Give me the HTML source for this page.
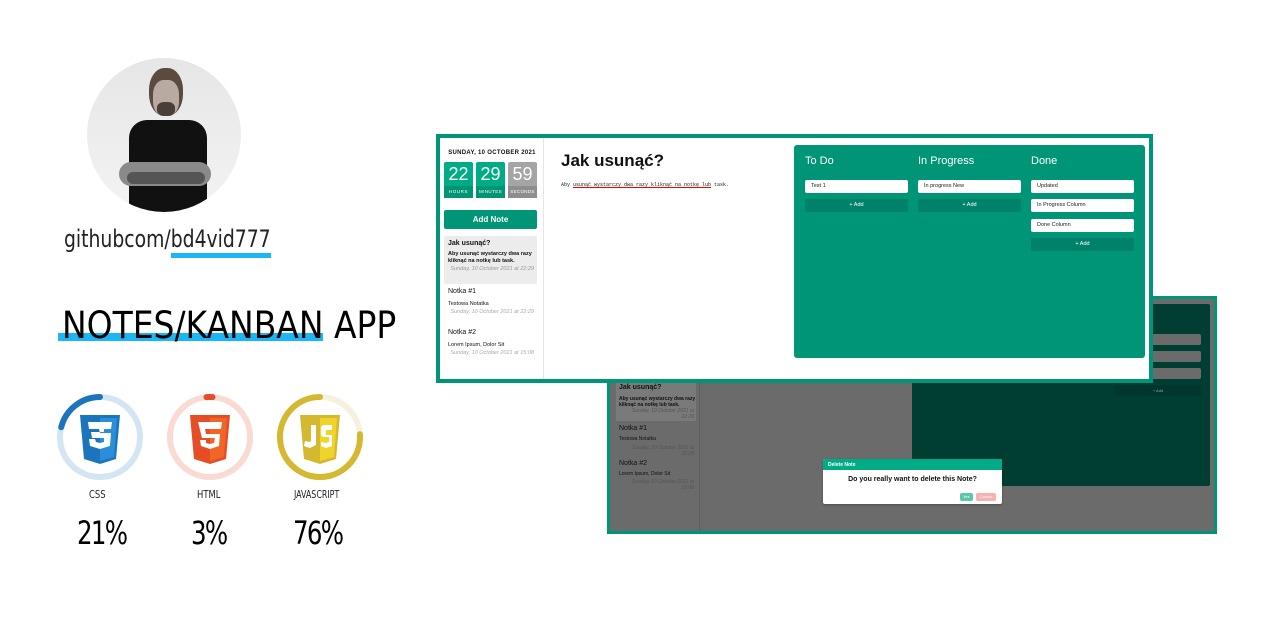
<!DOCTYPE html>
<html><head><meta charset="utf-8"><style>
*{margin:0;padding:0;box-sizing:border-box}
body{width:1280px;height:640px;background:#fff;position:relative;overflow:hidden;font-family:"Liberation Sans",sans-serif}
.a{position:absolute}
.thin{font-family:"DejaVu Sans Condensed","Liberation Sans",sans-serif;font-weight:200}
</style></head><body>

<!-- avatar -->
<div class="a" style="left:87px;top:58px;width:154px;height:154px;border-radius:50%;background:linear-gradient(#e6e6e6,#f3f3f3);overflow:hidden">
  <div class="a" style="left:62px;top:10px;width:34px;height:48px;border-radius:45%;background:#5a4a40"></div>
  <div class="a" style="left:66px;top:22px;width:26px;height:36px;border-radius:40%;background:#b8aaa0"></div>
  <div class="a" style="left:70px;top:44px;width:18px;height:14px;border-radius:40%;background:#4a3f38"></div>
  <div class="a" style="left:42px;top:62px;width:78px;height:100px;border-radius:18px 18px 0 0;background:#111"></div>
  <div class="a" style="left:32px;top:104px;width:92px;height:24px;border-radius:12px;background:#8a8a8a"></div>
  <div class="a" style="left:40px;top:114px;width:78px;height:12px;border-radius:8px;background:#555"></div>
</div>

<div class="a thin" style="left:64px;top:225px;font-size:24px;color:#222;transform:scaleX(0.87);transform-origin:left;white-space:nowrap">githubcom/<span style="border-bottom:5px solid #1ab6f5">bd4vid777</span></div>

<div class="a" style="left:58px;top:333px;width:265px;height:8px;background:#1ab6f5"></div>
<div class="a thin" style="left:62px;top:304px;font-size:37px;color:#000;white-space:nowrap;transform:scaleX(0.99);transform-origin:left">NOTES/KANBAN APP</div>

<!-- rings -->
<svg class="a" style="left:50px;top:387px" width="330" height="100">
  <g fill="none" stroke-width="6" stroke-linecap="round">
    <circle cx="50" cy="50" r="40" stroke="#d3e5f3"/>
    <circle cx="50" cy="50" r="40" stroke="#1c75bc" stroke-dasharray="52.8 300" transform="rotate(-90 50 50) scale(1,-1) translate(0,-100)"/>
    <circle cx="160" cy="50" r="40" stroke="#f9dbd3"/>
    <circle cx="160" cy="50" r="40" stroke="#e44d26" stroke-dasharray="6 300" transform="rotate(-95 160 50)"/>
    <circle cx="270" cy="50" r="40" stroke="#f5f1dc"/>
    <circle cx="270" cy="50" r="40" stroke="#d4b830" stroke-dasharray="191 300" transform="translate(0,100) scale(1,-1) rotate(90 270 50)"/>
  </g>
  <path d="M30 28h40l-4 44-16 5-16-5z" fill="#1c75bc"/>
  <path d="M50 31h17l-3 39-14 4z" fill="#2a8fd8"/>
  <path d="M38 35h24l-1 7h-12l1 4h11l-1 13-10 3-10-3-1-7h6l1 3 4 1 4-1v-4h-12l-1-6h13l0-3h-15z" fill="#fff"/>
  <path d="M140 28h40l-4 44-16 5-16-5z" fill="#e44d26"/>
  <path d="M160 31h17l-3 39-14 4z" fill="#f16529"/>
  <path d="M148 35h24l-1 7h-16l1 5h14l-1 12-9 3-9-3-1-6h6l0 3 4 1 4-1 1-5h-13z" fill="#fff"/>
  <path d="M250 28h40l-4 44-16 5-16-5z" fill="#d4b830"/>
  <path d="M270 31h17l-3 39-14 4z" fill="#f0d42a"/>
  <path d="M261 38h5v20l-6 3-6-2 1-5 4 1 2-1z" fill="#fff"/>
  <path d="M282 38h-9l-2 2v8l2 2h6v5l-3 1-5-1v4l5 2 6-2v-11h-6v-5h6z" fill="#fff"/>
</svg>
<div class="a thin" style="left:89px;top:488px;font-size:11px;color:#222;transform:scaleX(.85);transform-origin:left">CSS</div>
<div class="a thin" style="left:197px;top:488px;font-size:11px;color:#222;transform:scaleX(.85);transform-origin:left">HTML</div>
<div class="a thin" style="left:294px;top:488px;font-size:11px;color:#222;transform:scaleX(.8);transform-origin:left">JAVASCRIPT</div>
<div class="a thin" style="left:77px;top:514px;font-size:32px;color:#000;letter-spacing:-2px;transform:scaleX(0.85);transform-origin:left">21%</div>
<div class="a thin" style="left:191px;top:514px;font-size:32px;color:#000;letter-spacing:-2px;transform:scaleX(0.85);transform-origin:left">3%</div>
<div class="a thin" style="left:293px;top:514px;font-size:32px;color:#000;letter-spacing:-2px;transform:scaleX(0.85);transform-origin:left">76%</div>

<!-- screenshot 2 -->
<div class="a" style="left:607px;top:296px;width:610px;height:238px;border:3px solid #009577;background:#6b6b6b;overflow:hidden">
  <div class="a" style="left:89px;top:0;width:1px;height:240px;background:#5e5e5e"></div>
  <div class="a" style="left:6px;top:0;width:80px;height:122px;background:#7a7a7a"></div>
  <div class="a" style="left:9px;top:85px;font-size:7px;font-weight:bold;color:#111">Jak usunąć?</div>
  <div class="a" style="left:9px;top:97px;font-size:5px;font-weight:bold;color:#111;width:78px">Aby usunąć wystarczy dwa razy kliknąć na notkę lub task.</div>
  <div class="a" style="left:9px;top:109px;font-size:5px;font-style:italic;color:#555;width:75px;text-align:right">Sunday, 10 October 2021 at 22:29</div>
  <div class="a" style="left:9px;top:126px;font-size:7px;color:#111">Notka #1</div>
  <div class="a" style="left:9px;top:137px;font-size:5px;color:#111">Testowa Notatka</div>
  <div class="a" style="left:9px;top:146px;font-size:5px;font-style:italic;color:#555;width:75px;text-align:right">Sunday, 10 October 2021 at 22:29</div>
  <div class="a" style="left:9px;top:161px;font-size:7px;color:#111">Notka #2</div>
  <div class="a" style="left:9px;top:172px;font-size:5px;color:#111">Lorem Ipsum, Dolor Sit</div>
  <div class="a" style="left:9px;top:180px;font-size:5px;font-style:italic;color:#555;width:75px;text-align:right">Sunday, 10 October 2021 at 15:08</div>
  <div class="a" style="left:302px;top:5px;width:298px;height:182px;background:#003d33;border-radius:2px"></div>
  <div class="a" style="left:505px;top:35px;width:86px;height:11px;background:#6b6b6b;border-radius:2px"></div>
  <div class="a" style="left:505px;top:52px;width:86px;height:11px;background:#6b6b6b;border-radius:2px"></div>
  <div class="a" style="left:505px;top:69px;width:86px;height:11px;background:#6b6b6b;border-radius:2px"></div>
  <div class="a" style="left:505px;top:86px;width:86px;height:11px;background:#00362d;border-radius:2px;font-size:4px;color:#6b8;text-align:center;line-height:11px">+ Add</div>
  <div class="a" style="left:213px;top:160px;width:179px;height:45px;background:#fff;border-radius:2px;overflow:hidden;box-shadow:0 1px 2px rgba(0,0,0,.3)">
    <div style="background:#00ac85;height:11px;font-size:5px;font-weight:bold;color:#fff;padding:3px 5px">Delete Note</div>
    <div style="font-size:7px;font-weight:bold;color:#111;text-align:center;margin-top:6px">Do you really want to delete this Note?</div>
    <div class="a" style="left:137px;top:34px;width:13px;height:8px;background:#5ac8a8;border-radius:2px;font-size:4px;color:#fff;text-align:center;line-height:8px">Yes</div>
    <div class="a" style="left:153px;top:34px;width:20px;height:8px;background:#f8b0b0;border-radius:2px;font-size:4px;color:#fff;text-align:center;line-height:8px">Cancel</div>
  </div>
</div>

<!-- screenshot 1 -->
<div class="a" style="left:436px;top:134px;width:717px;height:249px;border:4px solid #009577;background:#fff;overflow:hidden">
  <div class="a" style="left:103px;top:0;width:1px;height:250px;background:#e6e6e6"></div>
  <div class="a" style="left:0px;top:12px;width:104px;text-align:center;font-size:6px;font-weight:bold;letter-spacing:.3px;color:#111;white-space:nowrap">SUNDAY, 10 OCTOBER 2021</div>
  <div class="a" style="left:4px;top:24px;width:29px;height:36px;background:#00ac85;border-radius:2px;color:#fff;text-align:center">
    <div style="font-size:18px;line-height:24px">22</div><div style="font-size:4.5px;letter-spacing:.6px;background:#009674;line-height:12px">HOURS</div></div>
  <div class="a" style="left:36px;top:24px;width:29px;height:36px;background:#00ac85;border-radius:2px;color:#fff;text-align:center">
    <div style="font-size:18px;line-height:24px">29</div><div style="font-size:4.5px;letter-spacing:.4px;background:#009674;line-height:12px">MINUTES</div></div>
  <div class="a" style="left:68px;top:24px;width:29px;height:36px;background:#a5a5a5;border-radius:2px;color:#fff;text-align:center">
    <div style="font-size:18px;line-height:24px">59</div><div style="font-size:4.5px;letter-spacing:.3px;background:#8e8e8e;line-height:12px">SECONDS</div></div>
  <div class="a" style="left:4px;top:72px;width:93px;height:19px;background:#009577;border-radius:2px;color:#fff;font-size:8px;font-weight:bold;text-align:center;line-height:19px">Add Note</div>
  <div class="a" style="left:4px;top:98px;width:93px;height:48px;background:#ececec;border-radius:2px"></div>
  <div class="a" style="left:8px;top:102px;font-size:7px;font-weight:bold;color:#111">Jak usunąć?</div>
  <div class="a" style="left:8px;top:113px;font-size:5.5px;font-weight:bold;color:#111;width:88px;line-height:7px">Aby usunąć wystarczy dwa razy kliknąć na notkę lub task.</div>
  <div class="a" style="left:8px;top:128px;font-size:5.5px;font-style:italic;color:#999;width:86px;text-align:right;line-height:7px">Sunday, 10 October 2021 at 22:29</div>
  <div class="a" style="left:8px;top:150px;font-size:7px;color:#111">Notka #1</div>
  <div class="a" style="left:8px;top:163px;font-size:5.5px;color:#111">Testowa Notatka</div>
  <div class="a" style="left:8px;top:171px;font-size:5.5px;font-style:italic;color:#aaa;width:86px;text-align:right;line-height:7px">Sunday, 10 October 2021 at 22:29</div>
  <div class="a" style="left:8px;top:191px;font-size:7px;color:#111">Notka #2</div>
  <div class="a" style="left:8px;top:204px;font-size:5.5px;color:#111">Lorem Ipsum, Dolor Sit</div>
  <div class="a" style="left:8px;top:212px;font-size:5.5px;font-style:italic;color:#aaa;width:86px;text-align:right;line-height:7px">Sunday, 10 October 2021 at 15:08</div>
  <div class="a" style="left:121px;top:13px;font-size:17px;font-weight:bold;color:#111">Jak usunąć?</div>
  <div class="a" style="left:121px;top:44px;font-family:'Liberation Mono',monospace;font-size:5px;color:#222">Aby <u style="text-decoration-color:red">usunąć wystarczy dwa razy kliknąć na notkę lub</u> task.</div>
  <div class="a" style="left:354px;top:7px;width:351px;height:213px;background:#009577;border-radius:3px;color:#fff">
    <div class="a" style="left:11px;top:10px;font-size:11px">To Do</div>
    <div class="a" style="left:124px;top:10px;font-size:11px">In Progress</div>
    <div class="a" style="left:237px;top:10px;font-size:11px">Done</div>
    <div class="a" style="left:11px;top:35px;width:103px;height:13px;background:#fff;border-radius:2px;font-size:5.5px;color:#222;padding:0 6px;line-height:13px">Test 1</div>
    <div class="a" style="left:11px;top:54px;width:103px;height:13px;background:#00826a;border-radius:2px;font-size:5.5px;color:#fff;text-align:center;line-height:13px">+ Add</div>
    <div class="a" style="left:124px;top:35px;width:103px;height:13px;background:#fff;border-radius:2px;font-size:5.5px;color:#222;padding:0 6px;line-height:13px">In progress New</div>
    <div class="a" style="left:124px;top:54px;width:103px;height:13px;background:#00826a;border-radius:2px;font-size:5.5px;color:#fff;text-align:center;line-height:13px">+ Add</div>
    <div class="a" style="left:237px;top:35px;width:103px;height:13px;background:#fff;border-radius:2px;font-size:5.5px;color:#222;padding:0 6px;line-height:13px">Updated</div>
    <div class="a" style="left:237px;top:54px;width:103px;height:13px;background:#fff;border-radius:2px;font-size:5.5px;color:#222;padding:0 6px;line-height:13px">In Progress Column</div>
    <div class="a" style="left:237px;top:74px;width:103px;height:13px;background:#fff;border-radius:2px;font-size:5.5px;color:#222;padding:0 6px;line-height:13px">Done Column</div>
    <div class="a" style="left:237px;top:93px;width:103px;height:13px;background:#00826a;border-radius:2px;font-size:5.5px;color:#fff;text-align:center;line-height:13px">+ Add</div>
  </div>
</div>
</body></html>
